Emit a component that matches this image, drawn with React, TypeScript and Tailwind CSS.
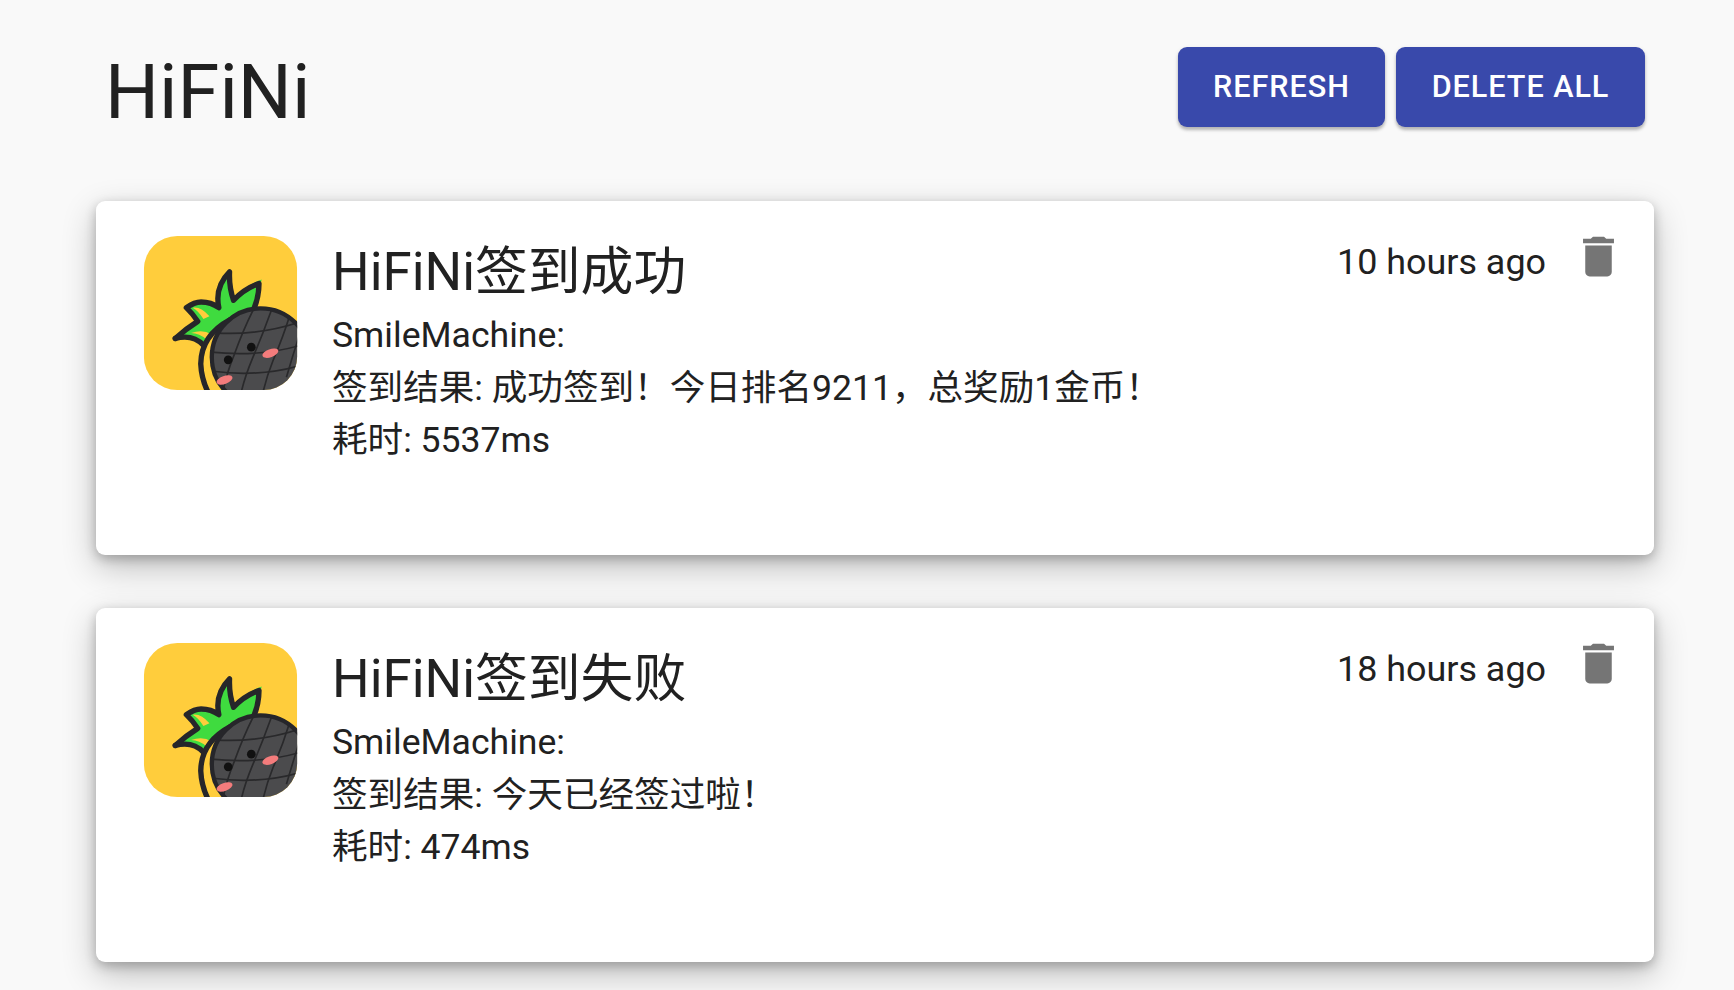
function PineappleLogo() {
  return (
    <svg viewBox="44 48 458 460" className="w-[155px] h-[154px] shrink-0">
      <defs>
        <clipPath id="tile">
          <rect x="44" y="48" width="458" height="460" rx="100" />
        </clipPath>
        <clipPath id="fruit">
          <circle cx="393" cy="410" r="146" />
        </clipPath>
      </defs>
      <g clipPath="url(#tile)">
        <rect x="44" y="48" width="458" height="460" fill="#ffcd3c" />
        {/* crown */}
        <path
          d="M138 354 L205 303 L171 262 Q215 222 268 262 Q255 200 300 155 Q305 205 312 240 Q345 195 396 178 Q388 225 372 268 L300 298 Q235 330 222 372 Q190 335 138 354 Z"
          fill="#3fdb3f"
        />
        <path d="M190 262 Q215 258 240 288 L222 296 Q208 272 190 262 Z" fill="#ffcd3c" />
        <path
          d="M138 354 Q170 325 205 303 Q190 280 171 262 Q195 245 215 245 Q245 245 268 262 Q255 200 300 155 Q298 200 312 240 Q345 205 388 190 Q388 230 372 268"
          fill="none"
          stroke="#26262a"
          strokeWidth="16"
          strokeLinecap="round"
          strokeLinejoin="round"
        />
        <path
          d="M138 354 Q190 340 222 374"
          fill="none"
          stroke="#26262a"
          strokeWidth="16"
          strokeLinecap="round"
        />
        <path d="M185 338 Q210 338 232 358 L246 342 Q220 325 185 338 Z" fill="#ffcd3c" />
        {/* rind */}
        <path
          d="M302 298 Q215 345 214 430 Q216 475 236 515"
          fill="none"
          stroke="#26262a"
          strokeWidth="16"
          strokeLinecap="round"
        />
        <circle cx="393" cy="410" r="146" fill="#4b4b4d" />
        <g clipPath="url(#fruit)" fill="none" stroke="#29292b" strokeWidth="5">
          <path d="M262 338 Q390 345 510 305" />
          <path d="M244 395 Q390 410 510 375" />
          <path d="M250 452 Q390 470 510 435" />
          <path d="M370 270 Q340 330 315 400 Q290 460 280 515" />
          <path d="M425 270 Q400 340 370 410 Q345 470 335 515" />
          <path d="M480 285 Q460 350 430 420 Q410 470 400 515" />
          <path d="M510 340 Q490 400 470 470" />
        </g>
        <circle cx="393" cy="410" r="146" fill="none" stroke="#26262a" strokeWidth="13" />
        <circle cx="365" cy="380" r="13" fill="#111" />
        <circle cx="296" cy="418" r="13" fill="#111" />
        <ellipse cx="422" cy="398" rx="25" ry="12" transform="rotate(-20 422 398)" fill="#f47c7c" />
        <ellipse cx="285" cy="478" rx="25" ry="12" transform="rotate(-20 285 478)" fill="#f47c7c" />
      </g>
    </svg>
  );
}

function TrashIcon() {
  return (
    <svg viewBox="0 0 24 24" className="w-[53px] h-[53px] fill-[#757575]">
      <path d="M6 19c0 1.1.9 2 2 2h8c1.1 0 2-.9 2-2V7H6v12zM19 4h-3.5l-1-1h-5l-1 1H5v2h14V4z" />
    </svg>
  );
}

const messages = [
  {
    title: "HiFiNi签到成功",
    time: "10 hours ago",
    lines: ["SmileMachine:", "签到结果: 成功签到！今日排名9211，总奖励1金币！", "耗时: 5537ms"],
  },
  {
    title: "HiFiNi签到失败",
    time: "18 hours ago",
    lines: ["SmileMachine:", "签到结果: 今天已经签过啦！", "耗时: 474ms"],
  },
];

export default function App() {
  return (
    <div className="h-[990px] overflow-hidden bg-[#f9f9f9] text-[#212121] font-['Roboto','Noto_Sans_CJK_SC',sans-serif]">
      {/* Header */}
      <div className="flex justify-between pl-[105px] pr-[89px] pt-[47px] h-[201px] items-start">
        <h1 className="text-[75.8px] leading-[87px] font-normal mt-[2px]">HiFiNi</h1>
        <div className="flex gap-[11px]">
          <button className="h-[80px] w-[207px] rounded-[9px] bg-[#3949ab] text-white text-[30.6px] font-medium tracking-[0.95px] shadow-[0_3px_3px_rgba(0,0,0,0.2),0_2px_5px_rgba(0,0,0,0.12)]">
            REFRESH
          </button>
          <button className="h-[80px] w-[249px] rounded-[9px] bg-[#3949ab] text-white text-[30.6px] font-medium tracking-[0.95px] shadow-[0_3px_3px_rgba(0,0,0,0.2),0_2px_5px_rgba(0,0,0,0.12)]">
            DELETE ALL
          </button>
        </div>
      </div>

      {/* Messages */}
      <div className="flex flex-col gap-[53px] ml-[96px] mr-[80px]">
        {messages.map((m) => (
          <div
            key={m.title}
            className="flex h-[354px] rounded-[9px] bg-white pl-[47px] pr-[29px] pt-[35px] shadow-[0_12px_34px_rgba(0,0,0,0.24),0_4px_12px_rgba(0,0,0,0.24)]"
          >
            <PineappleLogo />
            <div className="ml-[34px] flex-1">
              <div className="text-[52.8px] leading-[70px] mt-[1px]">{m.title}</div>
              <div className="mt-[2px] text-[35.6px] leading-[52.6px]">
                {m.lines.map((line) => (
                  <div key={line}>{line}</div>
                ))}
              </div>
            </div>
            <div className="flex items-start">
              <span className="text-[35.9px] leading-[52.6px] mt-[0px] mr-[26px]">{m.time}</span>
              <div className="-mt-[6px]">
                <TrashIcon />
              </div>
            </div>
          </div>
        ))}
      </div>
    </div>
  );
}
